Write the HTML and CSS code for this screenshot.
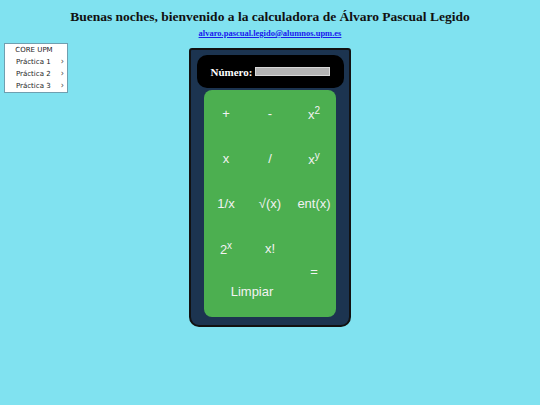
FILE: index.html
```html
<!doctype html>
<html>
    <head>
        <meta charset="UTF-8" />
        <meta name="viewport" content="width=device-width" />
        <title>Calculadora</title>
        <link rel="stylesheet" href="styles.css">
    </head>
    <body>
        <header class="header">
            <h1 class="title">Buenas noches, bienvenido a la calculadora de Álvaro Pascual Legido</h1>
            <p class="contact"><a class="email" href="mailto:alvaro.pascual.legido@alumnos.upm.es">alvaro.pascual.legido@alumnos.upm.es</a></p>
        </header>
        <div class="page">
            <ul class="menu">
                <li class="menuTitle">CORE UPM</li>
                <li class="menuItem">Práctica 1<span class="arrow">&#8250;</span></li>
                <li class="menuItem">Práctica 2<span class="arrow">&#8250;</span></li>
                <li class="menuItem">Práctica 3<span class="arrow">&#8250;</span></li>
            </ul>
            <div class="calc">
                <div class="screen">
                    <label class="label" for="num">Número:</label>
                    <input class="input" id="num" type="text" />
                </div>
                <div class="keys">
                    <table class="keyTable">
                        <tr>
                            <td>+</td>
                            <td>-</td>
                            <td>x<sup>2</sup></td>
                        </tr>
                        <tr>
                            <td>x</td>
                            <td>/</td>
                            <td>x<sup>y</sup></td>
                        </tr>
                        <tr>
                            <td>1/x</td>
                            <td>&radic;(x)</td>
                            <td>ent(x)</td>
                        </tr>
                        <tr>
                            <td>2<sup>x</sup></td>
                            <td>x!</td>
                            <td rowspan="2">=</td>
                        </tr>
                        <tr>
                            <td colspan="2" class="clear">Limpiar</td>
                        </tr>
                    </table>
                </div>
            </div>
            <div></div>
        </div>
    </body>
</html>
```

FILE: styles.css
```css
html,
body {
    background-color: #80e2f0;
}
body {
    margin: 0;
    font-family: "Liberation Serif", serif;
}
.header {
    padding-top: 8px;
    text-align: center;
}
.title {
    margin: 0;
    font-size: 13.5px;
    line-height: 18px;
    font-weight: bold;
    color: #111;
}
.contact {
    margin: 2px 0 0;
    font-size: 8.5px;
    line-height: 11px;
}
.email {
    font-weight: bold;
    color: #1a1aee;
}
.page {
    display: grid;
    grid-template-columns: 1fr auto 1fr;
    margin-top: 4px;
}
.menu {
    justify-self: start;
    align-self: start;
    list-style: none;
    margin: 0 0 0 4px;
    padding: 0;
    width: 64px;
    box-sizing: border-box;
    background-color: white;
    border: 1px solid #6f9fb0;
    font-family: "DejaVu Sans", sans-serif;
    font-size: 7px;
    color: #222;
}
.menu li {
    height: 12px;
    line-height: 12px;
}
.menuTitle {
    text-align: center;
    padding-right: 4px;
}
.menuItem {
    display: flex;
    justify-content: space-between;
    padding: 0 3px 0 11px;
}
.arrow {
    font-size: 8px;
    color: #444;
}
.calc {
    margin-top: 5px;
    width: 162px;
    box-sizing: border-box;
    display: flex;
    flex-direction: column;
    align-items: center;
    padding: 5px 0 8px;
    background-color: #1c3450;
    border: 2px solid #111;
    border-radius: 3px 3px 10px 10px;
}
.screen {
    width: 147px;
    height: 33px;
    box-sizing: border-box;
    display: flex;
    align-items: center;
    padding-left: 14px;
    background-color: black;
    border-radius: 10px;
}
.label {
    color: white;
    font-size: 11px;
    font-weight: bold;
    margin-right: 3px;
}
.input {
    width: 75px;
    height: 9px;
    box-sizing: border-box;
    padding: 0;
    background-color: #b4b4b4;
    border: 1px solid #d8d8d8;
}
.keys {
    margin-top: 2px;
    width: 132px;
    padding: 1px 0;
    background-color: #4caf50;
    border-radius: 8px;
}
.keyTable {
    width: 100%;
    border-collapse: collapse;
    table-layout: fixed;
}
.keyTable td {
    height: 45px;
    padding: 0;
    text-align: center;
    font-family: "Liberation Sans", Arial, sans-serif;
    font-size: 13px;
    color: #f2f2f2;
}
.keyTable .clear {
    height: 41px;
    padding: 0 0 4px 8px;
}
.keyTable sup {
    font-size: 10px;
}
```
